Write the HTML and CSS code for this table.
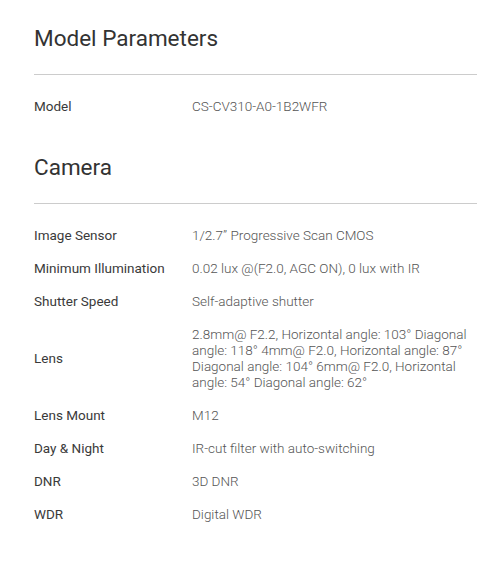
FILE: index.html
```html
<!DOCTYPE html>
<html lang="en">
<head>
    <meta charset="UTF-8">
    <meta name="viewport" content="width=device-width, initial-scale=1.0">
    <title>Model Parameters</title>
    <link rel="stylesheet" href="styles.css">
</head>
<body>
    <div class="container">
        <div class="section">
            <div class="section-title">Model Parameters</div>
            <div class="spec-list">
                <div class="spec-row">
                    <div class="spec-name">Model</div>
                    <div class="spec-value">CS-CV310-A0-1B2WFR</div>
                </div>
            </div>
        </div>

        <div class="section">
            <div class="section-title">Camera</div>
            <div class="spec-list">
                <div class="spec-row">
                    <div class="spec-name">Image Sensor</div>
                    <div class="spec-value">1/2.7” Progressive Scan CMOS</div>
                </div>
                <div class="spec-row">
                    <div class="spec-name">Minimum Illumination</div>
                    <div class="spec-value">0.02 lux @(F2.0, AGC ON), 0 lux with IR</div>
                </div>
                <div class="spec-row">
                    <div class="spec-name">Shutter Speed</div>
                    <div class="spec-value">Self-adaptive shutter</div>
                </div>
                <div class="spec-row">
                    <div class="spec-name">Lens</div>
                    <div class="spec-value">2.8mm@ F2.2, Horizontal angle: 103° Diagonal angle: 118° 4mm@ F2.0, Horizontal angle: 87° Diagonal angle: 104° 6mm@ F2.0, Horizontal angle: 54° Diagonal angle: 62°</div>
                </div>
                <div class="spec-row">
                    <div class="spec-name">Lens Mount</div>
                    <div class="spec-value">M12</div>
                </div>
                <div class="spec-row">
                    <div class="spec-name">Day &amp; Night</div>
                    <div class="spec-value">IR-cut filter with auto-switching</div>
                </div>
                <div class="spec-row">
                    <div class="spec-name">DNR</div>
                    <div class="spec-value">3D DNR</div>
                </div>
                <div class="spec-row">
                    <div class="spec-name">WDR</div>
                    <div class="spec-value">Digital WDR</div>
                </div>
            </div>
        </div>
    </div>
</body>
</html>
```

FILE: styles.css
```css
body {
    margin: 0;
    font-family: Roboto, "Liberation Sans", sans-serif;
    background-color: #fff;
    color: #333;
}
.container {
    padding: 22px 0 0 34px;
}
.section-title {
    font-size: 22.5px;
    line-height: 32px;
    font-weight: 400;
    color: #333;
    padding-bottom: 20px;
    border-bottom: 1px solid #ccc;
}
.spec-list {
    padding: 15px 0 28px;
}
.spec-row {
    display: grid;
    grid-template-columns: 158px 278px;
    align-items: center;
    padding: 8px 0 9px;
    font-size: 13.5px;
    line-height: 16px;
}
.spec-name {
    color: #3a3a3a;
}
.spec-value {
    color: #555;
    font-weight: 300;
}
```
